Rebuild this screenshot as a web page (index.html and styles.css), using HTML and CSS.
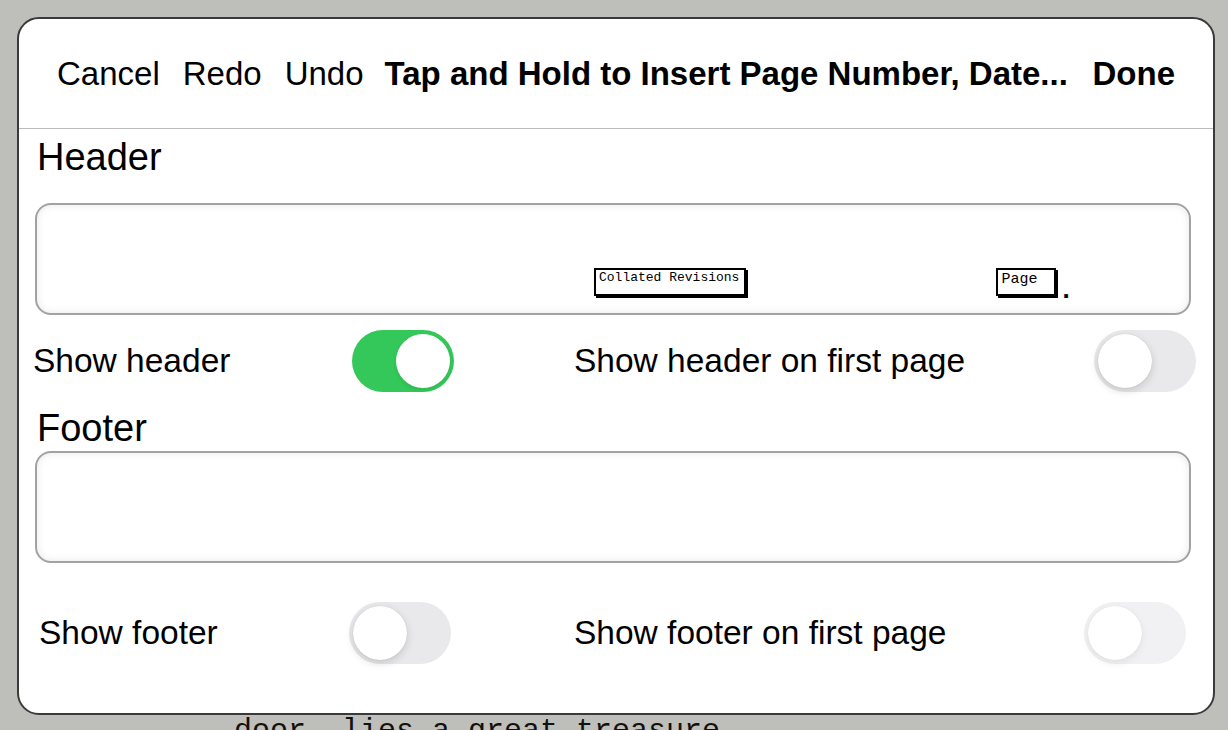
FILE: index.html
```html
<!DOCTYPE html>
<html lang="en">
<head>
    <meta charset="UTF-8">
    <meta name="viewport" content="width=device-width, initial-scale=1.0">
    <title>Header and Footer</title>
    <link rel="stylesheet" href="styles.css">
</head>
<body>
    <!-- document behind the sheet -->
    <div class="doc">
        <p>door, lies a great treasure.</p>
    </div>

    <div class="sheet">
        <div class="toolbar">
            <span class="tb-item">Cancel</span>
            <span class="tb-item">Redo</span>
            <span class="tb-item">Undo</span>
            <span class="tb-item tb-title">Tap and Hold to Insert Page Number, Date...</span>
            <span class="tb-item tb-done">Done</span>
        </div>

        <div class="section-title">Header</div>
        <div class="field">
            <span class="token">Collated Revisions</span>
            <span class="token token-page">Page</span>
            <span class="dot">.</span>
        </div>
        <div class="option-row header-row">
            <span class="label">Show header</span>
            <span class="switch on"></span>
            <span class="label">Show header on first page</span>
            <span class="switch"></span>
        </div>

        <div class="section-title footer-title">Footer</div>
        <div class="field"></div>
        <div class="option-row footer-row">
            <span class="label">Show footer</span>
            <span class="switch"></span>
            <span class="label">Show footer on first page</span>
            <span class="switch dim"></span>
        </div>
    </div>
</body>
</html>
```

FILE: styles.css
```css
body {
    margin: 0;
    padding: 0;
    width: 1228px;
    height: 730px;
    overflow: hidden;
    background-color: #bebfbb;
    font-family: "Liberation Sans", Arial, sans-serif;
    color: #000;
}
.doc {
    padding: 714px 0 0 234px;
}
.doc p {
    margin: 0;
    font-family: "Liberation Mono", "Courier New", monospace;
    font-size: 30px;
    line-height: 34px;
    color: #111;
    white-space: pre;
}
.sheet {
    position: absolute;
    top: 17px;
    left: 17px;
    width: 1198px;
    height: 698px;
    box-sizing: border-box;
    background-color: #fff;
    border: 2px solid #3a3a3a;
    border-radius: 22px;
    overflow: hidden;
}
.toolbar {
    display: flex;
    align-items: center;
    height: 109px;
    padding: 0 38px 0 38px;
    border-bottom: 1px solid #bcbcbc;
    font-size: 33px;
}
.tb-item {
    margin-right: 23px;
}
.tb-title, .tb-done {
    font-weight: bold;
}
.tb-title {
    margin-left: -2px;
    margin-right: 0;
}
.tb-done {
    margin-left: auto;
    margin-right: 0;
}
.section-title {
    margin-top: 6px;
    padding-left: 18px;
    font-size: 38px;
    line-height: 44px;
}
.footer-title {
    margin-top: 14px;
}
.field {
    display: flex;
    align-items: flex-start;
    margin: 24px 0 0 16px;
    width: 1156px;
    height: 112px;
    box-sizing: border-box;
    padding: 63px 0 0 557px;
    border: 2px solid #a2a2a2;
    border-radius: 16px;
    box-shadow: inset 0 0 9px rgba(0, 0, 0, 0.09);
}
.footer-title + .field {
    margin-top: 1px;
}
.token {
    display: block;
    height: 23px;
    padding: 1px 5px 0 3px;
    border: 2px solid #000;
    box-shadow: 2px 2px 0 #000;
    background-color: #fff;
    font-family: "Liberation Mono", "Courier New", monospace;
    font-size: 13px;
    line-height: 13px;
}
.token-page {
    margin-left: 250px;
    width: 48px;
    padding-top: 2px;
    height: 22px;
    font-size: 15px;
    line-height: 15px;
}
.dot {
    margin: 8px 0 0 6px;
    font-size: 26px;
    font-weight: bold;
    line-height: 26px;
}
.option-row {
    display: grid;
    align-items: center;
    height: 62px;
    margin-top: 15px;
    font-size: 33.5px;
}
.header-row {
    grid-template-columns: 319px 222px 520px 102px;
    padding-left: 14px;
}
.footer-row {
    grid-template-columns: 310px 225px 510px 102px;
    padding-left: 20px;
    margin-top: 39px;
}
.switch {
    position: relative;
    display: block;
    width: 102px;
    height: 62px;
    border-radius: 31px;
    background-color: #e9e9eb;
}
.switch::after {
    content: "";
    position: absolute;
    top: 4px;
    left: 4px;
    width: 54px;
    height: 54px;
    border-radius: 50%;
    background-color: #fff;
    box-shadow: 0 3px 8px rgba(0, 0, 0, 0.15), 0 0 1px rgba(0, 0, 0, 0.16);
}
.switch.on {
    background-color: #34c759;
}
.switch.on::after {
    left: 44px;
    box-shadow: 0 2px 4px rgba(0, 0, 0, 0.08);
}
.switch.dim {
    background-color: #f1f1f3;
}
.switch.dim::after {
    box-shadow: 0 3px 8px rgba(0, 0, 0, 0.07), 0 0 1px rgba(0, 0, 0, 0.1);
}
```
